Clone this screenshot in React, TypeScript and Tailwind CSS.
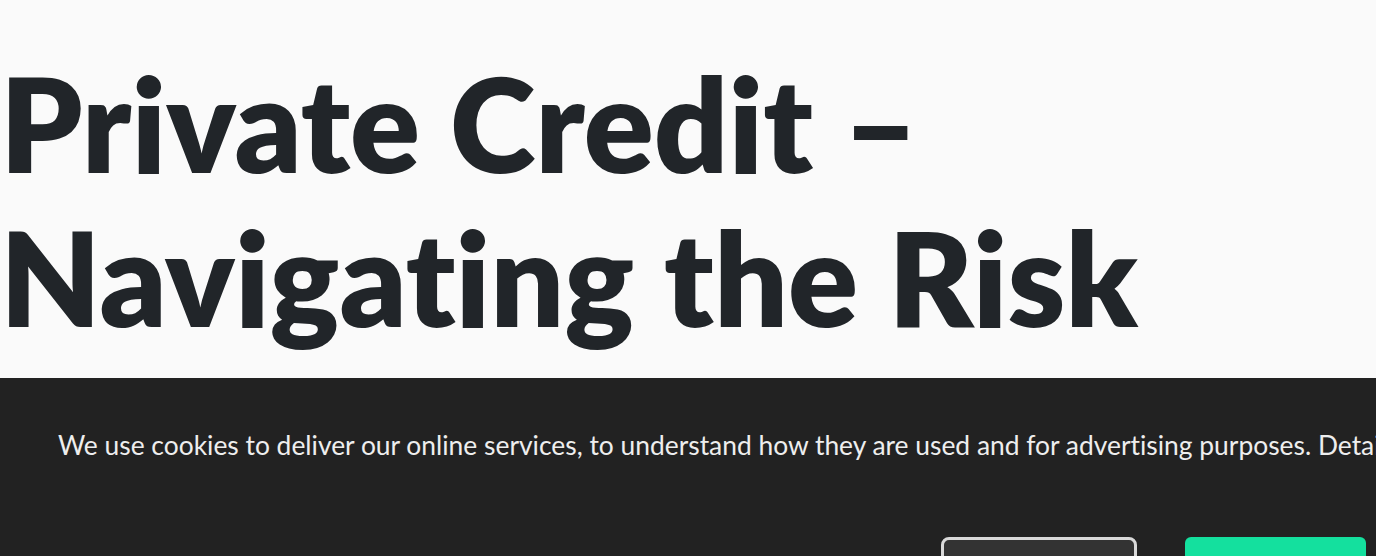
export default function App() {
  return (
    <div className="w-[1376px] h-[556px] overflow-hidden bg-[#fafafa] [font-variant-ligatures:none]" style={{ fontFamily: "Lato, 'Liberation Sans', sans-serif" }}>
      <h1 className="pt-[46px] m-0 text-[130px] leading-[154px] font-extrabold text-[#212529] whitespace-nowrap">
        Private Credit –<br />Navigating the Risk
      </h1>
      <div className="mt-[24px] bg-[#222222] w-full pt-[48px]">
        <p className="pl-[58px] m-0 text-[26.4px] leading-[39px] text-[#eeeeee] whitespace-nowrap">
          We use cookies to deliver our online services, to understand how they are used and for advertising purposes. Details about cookies and how to change your settings can be found in our privacy policy.
        </p>
        <div className="flex justify-end gap-[48px] pr-[10px] pt-[72px] pb-[20px]">
          <button className="w-[196px] h-[60px] rounded-[8px] border-[3px] border-[#d9d9d9] bg-[#333333] text-[#eeeeee] text-[18px] font-bold">
            Settings
          </button>
          <button className="w-[181px] h-[60px] rounded-[6px] bg-[#14e09e] text-[#222222] text-[18px] font-bold">
            Accept
          </button>
        </div>
      </div>
    </div>
  );
}
